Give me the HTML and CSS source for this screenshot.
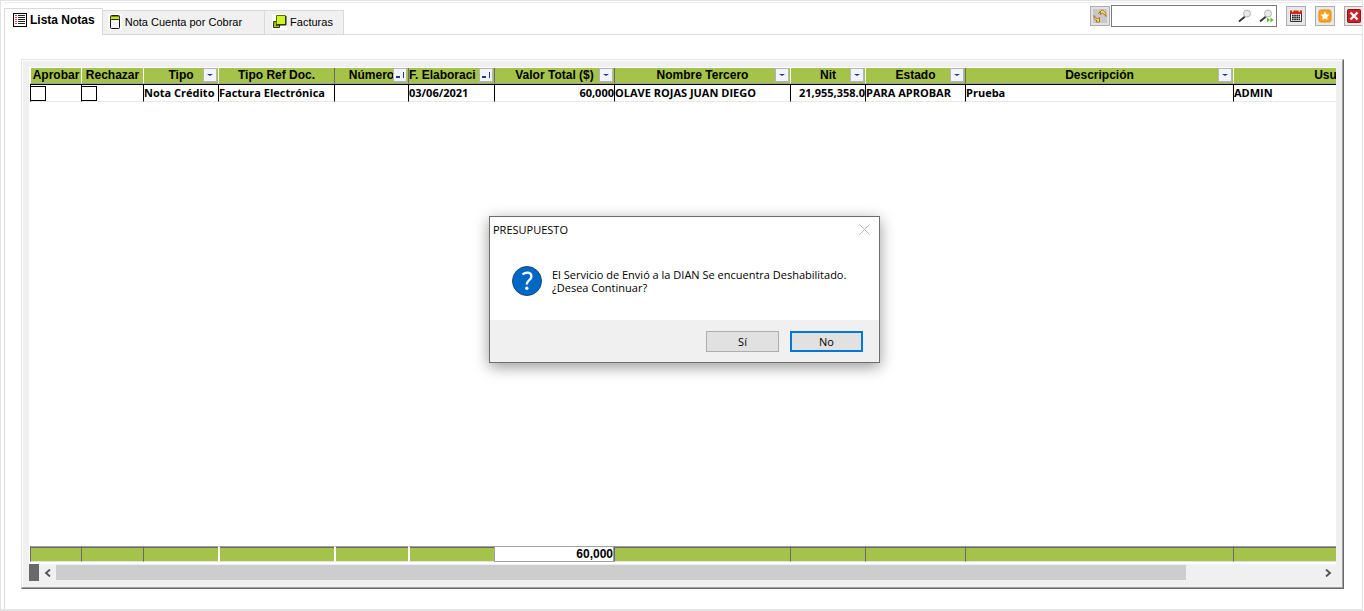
FILE: index.html
```
<!DOCTYPE html>
<html lang="es">
<head>
    <meta charset="UTF-8">
    <meta name="viewport" content="width=device-width, initial-scale=1.0">
    <title>Lista Notas</title>
    <link rel="stylesheet" href="styles.css">
</head>
<body>
    <div class="window">
        <header class="topbar">
            <nav class="tabs">
                <button type="button" class="tab active">
                    <svg width="14" height="14" viewBox="0 0 14 14" shape-rendering="crispEdges">
                        <path d="M0.500 0.500h13v13h-13z" fill="#fff" stroke="#000"/>
                        <path d="M5 2.500h7M5 4.500h7M5 6.500h7M5 8.500h7M5 10.500h7" stroke="#222"/>
                        <path d="M2 2.500h2M2 4.500h2M2 6.500h2M2 8.500h2M2 10.500h2" stroke="#e04040"/>
                    </svg>
                    Lista Notas
                </button>
                <button type="button" class="tab">
                    <svg width="14" height="16" viewBox="0 0 14 16">
                        <path fill="#fff" d="M0 0h14v16H0z"/>
                        <path d="M2.500 5v8.500q0 1 1 1h7q1 0 1-1V5" fill="#f4f4f4" stroke="#111"/>
                        <rect x="2.500" y="1.500" width="9" height="4" rx="1" fill="#c4e81c" stroke="#222"/>
                        <path d="M3 2.500h8" stroke="#6b8b00"/>
                    </svg>
                    Nota Cuenta por Cobrar
                </button>
                <button type="button" class="tab">
                    <svg width="15" height="16" viewBox="0 0 15 16">
                        <path fill="#fff" d="M0 0h15v16H0z"/>
                        <path d="M1.500 7.500h6v6h-6z" fill="#9dbb1c" stroke="#333"/>
                        <path d="M4.500 1.500h9v9h-9z" fill="#ccf51f" stroke="#56700a"/>
                        <path d="M4 11h10V2" fill="none" stroke="#111"/>
                    </svg>
                    Facturas
                </button>
            </nav>
            <div class="tools">
                <button type="button" class="tool refresh" aria-label="Actualizar">
                    <svg width="14" height="14" viewBox="0 0 14 14">
                        <path d="M1 6.500l2 2.500 1.500 1 2-1.500v4.500H3l1-1.200C2 11 .8 9 1 6.500z" fill="#ffdf7e" stroke="#a8690c" stroke-width=".9"/>
                        <path d="M13 7.500l-2-2.500L9.500 4l-2 1.500V2.200L5.500 4.500 9 .8l1.500 1C12.500 3 13.200 5 13 7.500z" fill="#ffdf7e" stroke="#a8690c" stroke-width=".9"/>
                    </svg>
                </button>
                <div class="search">
                    <input type="text" aria-label="Buscar">
                    <button type="button" aria-label="Buscar texto">
                        <svg width="16" height="16" viewBox="0 0 16 16">
                            <path d="M2 13.500l6-5" stroke="#333" stroke-width="1.800"/>
                            <circle cx="10" cy="5.500" r="3.500" fill="#e6e8ea" stroke="#b0b4b6"/>
                        </svg>
                    </button>
                    <button type="button" aria-label="Buscar siguiente">
                        <svg width="16" height="16" viewBox="0 0 16 16">
                            <path d="M2 13.500l6-5" stroke="#333" stroke-width="1.800"/>
                            <circle cx="10" cy="5.500" r="3.500" fill="#e6e8ea" stroke="#b0b4b6"/>
                            <path d="M9 9.500l3 2.500-3 2.500zM12.500 9.500l3 2.500-3 2.500z" fill="#57bd26"/>
                        </svg>
                    </button>
                </div>
                <button type="button" class="tool" aria-label="Calendario">
                    <svg width="14" height="14" viewBox="0 0 14 14">
                        <path d="M1.500 2.500h11v10h-11z" fill="#eee" stroke="#333"/>
                        <path d="M1 1.500h12V5H1z" fill="#d0281f"/>
                        <path d="M3 1h1.500v2H3zM9.500 1H11v2H9.500z" fill="#f5c4bf"/>
                        <path d="M3 6.500h8M3 8.500h8M3 10.500h8" stroke="#222" stroke-width="1.500" stroke-dasharray="1.700 .5"/>
                    </svg>
                </button>
                <button type="button" class="tool" aria-label="Favoritos">
                    <svg width="14" height="14" viewBox="0 0 14 14">
                        <rect x="1" y="1" width="12" height="12" rx="2" fill="#f9a21c" stroke="#e88b0c"/>
                        <path d="M7 2.500l1.400 2.800 3 .4-2.200 2.100.6 3L7 9.500l-2.800 1.300.6-3-2.200-2.100 3-.4z" fill="#fff"/>
                    </svg>
                </button>
                <button type="button" class="tool" aria-label="Cerrar">
                    <svg width="14" height="14" viewBox="0 0 14 14">
                        <rect x=".5" y=".5" width="13" height="13" rx="1" fill="#cf2026" stroke="#8f1216"/>
                        <path d="M3.500 3.500l7 7M10.500 3.500l-7 7" stroke="#fff" stroke-width="2.400"/>
                    </svg>
                </button>
            </div>
        </header>

        <main class="content">
            <section class="panel">
                <div class="grid">
                    <table class="table">
                        <colgroup>
                            <col class="w-aprobar"><col class="w-rechazar"><col class="w-tipo"><col class="w-ref">
                            <col class="w-numero"><col class="w-fecha"><col class="w-valor"><col class="w-tercero">
                            <col class="w-nit"><col class="w-estado"><col class="w-desc"><col class="w-usuario">
                        </colgroup>
                        <thead>
                            <tr>
                                <th>Aprobar</th>
                                <th>Rechazar</th>
                                <th>Tipo<button type="button" class="filter" aria-label="Filtrar Tipo"></button></th>
                                <th>Tipo Ref Doc.</th>
                                <th class="dark">Número<button type="button" class="filter sort" aria-label="Ordenar Número"></button></th>
                                <th class="dark start">F. Elaboraci<button type="button" class="filter sort" aria-label="Ordenar F. Elaboración"></button></th>
                                <th class="dark">Valor Total ($)<button type="button" class="filter" aria-label="Filtrar Valor Total"></button></th>
                                <th class="dark">Nombre Tercero<button type="button" class="filter" aria-label="Filtrar Nombre Tercero"></button></th>
                                <th>Nit<button type="button" class="filter" aria-label="Filtrar Nit"></button></th>
                                <th>Estado<button type="button" class="filter" aria-label="Filtrar Estado"></button></th>
                                <th class="dark">Descripción<button type="button" class="filter" aria-label="Filtrar Descripción"></button></th>
                                <th>Usuario</th>
                            </tr>
                        </thead>
                        <tbody>
                            <tr>
                                <td><input type="checkbox" class="check" aria-label="Aprobar"></td>
                                <td><input type="checkbox" class="check" aria-label="Rechazar"></td>
                                <td>Nota Crédito</td>
                                <td>Factura Electrónica</td>
                                <td></td>
                                <td>03/06/2021</td>
                                <td class="num">60,000</td>
                                <td>OLAVE ROJAS JUAN DIEGO</td>
                                <td class="num">21,955,358.0</td>
                                <td>PARA APROBAR</td>
                                <td>Prueba</td>
                                <td>ADMIN</td>
                            </tr>
                        </tbody>
                    </table>
                    <table class="table totals">
                        <colgroup>
                            <col class="w-aprobar"><col class="w-rechazar"><col class="w-tipo"><col class="w-ref">
                            <col class="w-numero"><col class="w-fecha"><col class="w-valor"><col class="w-tercero">
                            <col class="w-nit"><col class="w-estado"><col class="w-desc"><col class="w-usuario">
                        </colgroup>
                        <tbody>
                            <tr>
                                <td></td>
                                <td></td>
                                <td></td>
                                <td class="light"></td>
                                <td class="light"></td>
                                <td class="light"></td>
                                <td class="total">60,000</td>
                                <td></td>
                                <td></td>
                                <td></td>
                                <td></td>
                                <td></td>
                            </tr>
                        </tbody>
                    </table>
                </div>
                <div class="scrollbar">
                    <span class="split"></span>
                    <button type="button" class="arrow" aria-label="Desplazar a la izquierda">
                        <svg width="8" height="8" viewBox="0 0 8 8"><path d="M6 .5L2 4l4 3.500" fill="none" stroke="#505050" stroke-width="1.800"/></svg>
                    </button>
                    <div class="track"><div class="thumb"></div></div>
                    <button type="button" class="arrow" aria-label="Desplazar a la derecha">
                        <svg width="8" height="8" viewBox="0 0 8 8"><path d="M2 .5L6 4 2 7.500" fill="none" stroke="#505050" stroke-width="1.800"/></svg>
                    </button>
                </div>
            </section>
        </main>
    </div>

    <dialog class="dialog" open aria-labelledby="dialog-title">
        <div class="dialog-head">
            <h1 id="dialog-title">PRESUPUESTO</h1>
            <button type="button" class="dialog-close" aria-label="Cerrar">
                <svg width="11" height="11" viewBox="0 0 11 11"><path d="M.5 .5l10 10M10.500 .5l-10 10" stroke="#b5b5b5"/></svg>
            </button>
        </div>
        <div class="dialog-body">
            <svg width="32" height="32" viewBox="0 0 32 32">
                <circle cx="16" cy="16" r="14.500" fill="#0067c5" stroke="#134b7c"/>
                <path d="M11.500 9.500Q13.500 7.600 16.200 7.600Q20.400 7.600 20.400 11.500Q20.400 13.500 18 15.300Q15.800 17 15.800 19.500" fill="none" stroke="#fff" stroke-width="2.300"/>
                <circle cx="15.800" cy="23.300" r="1.700" fill="#fff"/>
            </svg>
            <p>El Servicio de Envió a la DIAN Se encuentra Deshabilitado.<br>¿Desea Continuar?</p>
        </div>
        <div class="dialog-foot">
            <button type="button">Sí</button>
            <button type="button" class="default">No</button>
        </div>
    </dialog>
</body>
</html>
```
FILE: styles.css
```
* {
    margin: 0;
    padding: 0;
    box-sizing: border-box;
}

body {
    height: 100vh;
    overflow: hidden;
    background: #fff;
    color: #000;
    font-family: "Liberation Sans", Arial, sans-serif;
    font-size: 12px;
}

button,
input {
    font: inherit;
    color: inherit;
}

svg {
    display: block;
    flex: none;
}

.window {
    display: flex;
    flex-direction: column;
    height: 100vh;
    margin-right: 1px;
    padding: 1px 0 0 1px;
    border: 1px solid #e3e3e3;
    border-bottom-width: 2px;
    overflow: hidden;
}

/* tabs and toolbar */
.topbar {
    display: flex;
    align-items: flex-end;
    height: 33px;
    margin-left: 2px;
    border-top: 1px solid #ececec;
    box-shadow: inset 0 -1px #dcdcdc;
}
.tabs {
    display: flex;
    align-items: flex-end;
}
.tab {
    display: flex;
    align-items: center;
    gap: 3px;
    height: 25px;
    padding: 0 10px 2px 5px;
    border: 1px solid #d9d9d9;
    border-left: none;
    background: #f0f0f0;
    font-size: 11px;
    white-space: nowrap;
}
.tab:nth-child(2) {
    padding-right: 22px;
}
.tab:nth-child(3) {
    padding-left: 7px;
}
.tab.active {
    height: 27px;
    padding: 0 7px 4px 8px;
    border-left: 1px solid #d9d9d9;
    border-bottom: none;
    background: #fff;
    font-size: 12px;
    font-weight: bold;
}
.tools {
    display: flex;
    align-items: center;
    gap: 9px;
    margin: 0 -2px 8px auto;
}
.tool {
    display: flex;
    align-items: center;
    justify-content: center;
    width: 20px;
    height: 20px;
    border: 1px solid #adadad;
    background: #e8e8e8;
}
.refresh {
    margin-right: -8px;
    background: #c8c8c8;
    box-shadow: inset 0 0 0 2px #e1e1e1;
}
.search {
    display: flex;
    align-items: center;
    width: 166px;
    height: 22px;
    border: 1px solid #7a7a7a;
    background: #fff;
}
.search input {
    flex: 1;
    min-width: 0;
    border: none;
    outline: none;
    background: none;
}
.search button {
    margin-right: 5px;
    border: none;
    background: none;
}
.search button:last-child {
    margin-right: 2px;
}

/* sunken panel with the grid */
.content {
    flex: 1;
    display: flex;
    min-height: 0;
    margin-left: 2px;
    padding: 24px 18px 20px 16px;
    border-left: 1px solid #d9d9d9;
}
.panel {
    flex: 1;
    display: flex;
    flex-direction: column;
    min-width: 0;
    padding: 7px 7px 7px 7px;
    border: 1px solid #696969;
    border-top-color: #e3e3e3;
    border-left-color: #e3e3e3;
    background: #f0f0f0;
    box-shadow: inset -1px -1px #a0a0a0, inset 1px 1px #fff;
}
.grid {
    flex: 1;
    display: flex;
    flex-direction: column;
    justify-content: space-between;
    min-height: 0;
    padding: 1px 0 2px 1px;
    overflow: hidden;
    background: #fff;
}
.table {
    width: 1409px;
    border-collapse: separate;
    border-spacing: 0;
    table-layout: fixed;
    flex: none;
}
.w-aprobar { width: 51px; }
.w-rechazar { width: 62px; }
.w-tipo { width: 75px; }
.w-ref { width: 116px; }
.w-numero { width: 74px; }
.w-fecha { width: 86px; }
.w-valor { width: 120px; }
.w-tercero { width: 176px; }
.w-nit { width: 75px; }
.w-estado { width: 100px; }
.w-desc { width: 268px; }
.w-usuario { width: 206px; }

.table th {
    position: relative;
    height: 16px;
    border-left: 1px solid #fff;
    border-bottom: 1px solid #a0a0a0;
    background: #a5c34b;
    line-height: 15px;
    white-space: nowrap;
}
.table th.dark {
    border-left-color: #696969;
}
.table th.start {
    text-align: left;
}
.filter {
    position: absolute;
    right: 1px;
    top: 0;
    width: 14px;
    height: 14px;
    border: 1px solid #b4b4b4;
    background: #f1f4fa;
}
.filter::after {
    content: "";
    position: absolute;
    left: 3px;
    top: 5px;
    border: 3px solid transparent;
    border-top: 2px solid #24388a;
    border-bottom: none;
}
.filter.sort::after {
    left: 2px;
    top: 3px;
    width: 7px;
    height: 6px;
    border: solid #24388a;
    border-width: 0 1px 0 0;
    background: linear-gradient(#24388a, #24388a) 0 4px / 4px 2px no-repeat;
}
.table td {
    height: 18px;
    border-top: 1px solid #000;
    border-left: 1px solid #000;
    border-bottom: 1px solid #e8e8e8;
    font-family: "Open Sans", "Noto Sans", sans-serif;
    font-size: 11px;
    font-weight: bold;
    line-height: 16px;
    white-space: nowrap;
    overflow: hidden;
}
.table .num {
    text-align: right;
}
.check {
    display: block;
    appearance: none;
    width: 15px;
    height: 15px;
    border: 1px solid #000;
    border-left: none;
    background: #fff;
}
.totals td {
    height: 16px;
    border: none;
    border-top: 1px solid #a0a0a0;
    border-left: 1px solid #696969;
    border-bottom: 1px solid #e3e3e3;
    background: #a5c34b;
    box-shadow: inset 0 1px #696969;
    font-family: "Liberation Sans", Arial, sans-serif;
    font-size: 12px;
    line-height: 14px;
}
.totals .light {
    border-left: 2px solid #fff;
}
.totals .total {
    border: 1px solid #a0a0a0;
    background: #fff;
    box-shadow: none;
    text-align: right;
}

.scrollbar {
    display: flex;
    align-items: center;
    height: 17px;
}
.split {
    width: 10px;
    height: 17px;
    background: #696969;
}
.arrow {
    display: flex;
    align-items: center;
    justify-content: center;
    width: 17px;
    height: 15px;
    border: none;
    background: #f0f0f0;
}
.track {
    flex: 1;
    height: 15px;
}
.thumb {
    width: 89.5%;
    height: 15px;
    background: #cdcdcd;
}

/* message box */
.dialog {
    position: absolute;
    left: 489px;
    top: 216px;
    width: 391px;
    border: 1px solid #6e6e6e;
    background: #fff;
    box-shadow: 0 4px 14px rgba(0, 0, 0, 0.4);
    font-family: "Open Sans", "Noto Sans", sans-serif;
    font-size: 11px;
}
.dialog-head {
    display: flex;
    align-items: center;
    justify-content: space-between;
    height: 24px;
    padding: 0 9px 0 3px;
}
.dialog-head h1 {
    font-size: 11px;
    font-weight: normal;
}
.dialog-close {
    border: none;
    background: none;
}
.dialog-body {
    display: flex;
    gap: 9px;
    padding: 24px 21px;
    height: 79px;
}
.dialog-body p {
    padding-top: 3px;
    line-height: 13px;
    white-space: nowrap;
}
.dialog-foot {
    display: flex;
    justify-content: flex-end;
    gap: 11px;
    padding: 11px 16px 10px;
    background: #f0f0f0;
}
.dialog-foot button {
    width: 73px;
    height: 21px;
    border: 1px solid #adadad;
    background: #e1e1e1;
}
.dialog-foot .default {
    border: 2px solid #0078d7;
}
```
